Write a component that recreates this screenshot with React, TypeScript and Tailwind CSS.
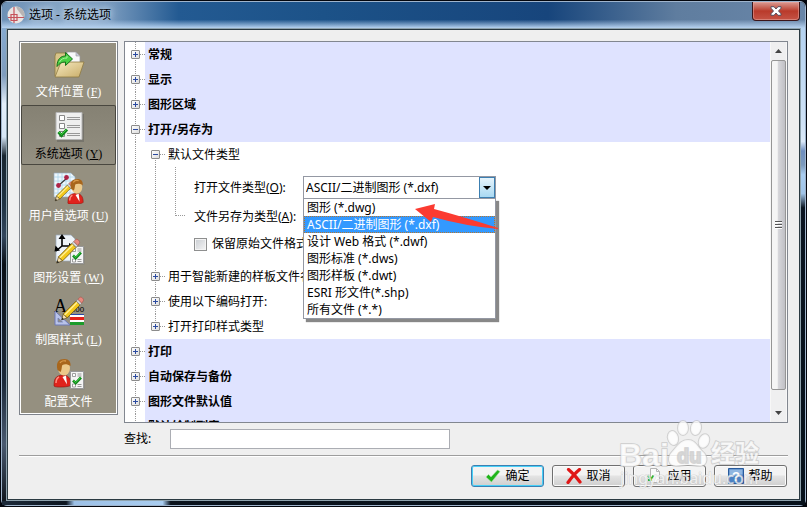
import { useState, type ReactNode } from 'react';
import clsx from 'clsx';

const FILE_TYPES = [
  '图形 (*.dwg)',
  'ASCII/二进制图形 (*.dxf)',
  '设计 Web 格式 (*.dwf)',
  '图形标准 (*.dws)',
  '图形样板 (*.dwt)',
  'ESRI 形文件(*.shp)',
  '所有文件 (*.*)',
];

function Pencil() {
  return (
    <g>
      <path d="M3 29l2-7 4.5 4.5z" fill="#f6dfae" stroke="#5b4a1a" strokeWidth=".8" />
      <path d="M3 29l.8-2.8 2 2z" fill="#222" />
      <path d="M5 22L20 7l4.500 4.500L9.500 26.500z" fill="#f3c81c" stroke="#6d540c" strokeWidth=".9" />
      <path d="M6.500 23.200L21.200 8.500" stroke="#fff19a" strokeWidth="1.500" />
      <path d="M20 7l2-2 4.500 4.500-2 2z" fill="#d8d8d8" stroke="#666" strokeWidth=".6" />
      <path d="M22 5l2.300-2.300c1.500-1.200 5.200 2.200 4 4L26.500 9.500z" fill="#e8897f" stroke="#9c4a40" strokeWidth=".6" />
    </g>
  );
}

function Person() {
  return (
    <g>
      <path d="M1 28c0-8 2-10 8-11 6 0 9 3 9 10 0 2-16 3-17 1z" fill="#e0231c" stroke="#8d120c" strokeWidth=".6" />
      <path d="M9.500 19l3.500-1.500 1 9z" fill="#fff" />
      <path d="M3 25c0-3 1-5 3-6" stroke="#ff8d7e" strokeWidth="1.500" fill="none" />
      <ellipse cx="11" cy="10" rx="6" ry="7.500" fill="#ecc98a" />
      <path d="M4.500 12C2.500 4 6 1 11.500 1 16 1 18 4 17.500 8c-3-2-6-2-8-1-1 1-.5 5-2 7z" fill="#a8661c" />
      <path d="M7 5c1-2 4-2.500 6-2" stroke="#d99b4c" strokeWidth="1.300" fill="none" />
    </g>
  );
}

function CheckSheet() {
  return (
    <g>
      <path d="M1.500 1.500h13v17h-13z" fill="#777" opacity=".5" />
      <path d="M.5.500h13v17H.500z" fill="#f4f4f4" stroke="#999" />
      <path d="M2.500 2.500h3v3h-3zM2.500 13h3v3h-3z" fill="#fff" stroke="#888" strokeWidth=".8" />
      <path d="M7.500 3h4M7.500 5h4M7.500 13.500h4M7.500 15.500h4" stroke="#999" />
      <path d="M3 9.500l2.700 2.700L11 6.500" fill="none" stroke="#128a1e" strokeWidth="2.600" />
      <path d="M3.500 9.500l2.200 2L10.500 6.500" fill="none" stroke="#3fce45" strokeWidth="1" />
    </g>
  );
}

function FolderIcon() {
  return (
    <svg viewBox="0 0 32 32" className="size-8">
      <defs>
        <linearGradient id="folder" x1="0" y1="0" x2="1" y2="1">
          <stop offset="0" stopColor="#f6eac0" />
          <stop offset="1" stopColor="#c9ad69" />
        </linearGradient>
      </defs>
      <path d="M2 8l1-3h9l2 3v20H2z" fill="#d8c489" stroke="#8f7b42" strokeWidth=".8" />
      <path d="M14 4h9l4 4v12H14z" fill="#f8f8fa" stroke="#999" strokeWidth=".7" />
      <path d="M23 4v4h4z" fill="#ccd" stroke="#999" strokeWidth=".6" />
      <path d="M8 14h23l-5 15H2z" fill="url(#folder)" stroke="#8f7b42" strokeWidth=".8" />
      <path d="M4 18.500C4 11 8 8 12.500 8V4.500l7 6.500-7 6.500V14c-4 0-6 1.500-8.500 4.500z" fill="#49cf43" stroke="#17701b" />
      <path d="M6.500 14c1.500-3 4-4 7.500-4V8" fill="none" stroke="#a8f29a" />
    </svg>
  );
}

function OptionsIcon() {
  return (
    <svg viewBox="0 0 32 32" className="size-8">
      <path d="M4 4h27v28H4z" fill="#555" opacity=".4" />
      <path d="M3 2.500h26v27H3z" fill="#efefef" stroke="#b5b5b5" />
      <path d="M6.500 5.500h5v5h-5zM6.500 13.500h5v5h-5zM6.500 21.500h5v5h-5z" fill="#fff" stroke="#888" />
      <path d="M14 7.500h13M14 9.500h13M14 15.500h13M14 17.500h13M14 23.500h13M14 25.500h13" stroke="#999" />
      <path d="M5.500 22l3 3.500 5.500-6" fill="none" stroke="#128a1e" strokeWidth="3" />
      <path d="M6 22l2.500 2.500 5-5" fill="none" stroke="#42d044" />
    </svg>
  );
}

function UserPrefsIcon() {
  return (
    <svg viewBox="0 0 32 32" className="size-8">
      <path d="M1 1h17l4 4v20H1z" fill="#eef7fd" stroke="#9ab" strokeWidth=".7" />
      <path d="M5 1v24M9 1v24M13 1v24M17 1v24M1 5h21M1 9h21M1 13h21M1 17h21M1 21h21" stroke="#a9d3ea" strokeWidth=".8" />
      <path d="M5 14l9-8" stroke="#333" strokeWidth="1.200" />
      <circle cx="5.500" cy="13.500" r="2.400" fill="#ad2348" />
      <circle cx="13.500" cy="5.500" r="2.400" fill="#ad2348" />
      <g transform="translate(0 8) scale(.72)"><Pencil /></g>
      <g transform="translate(14 6) scale(.9)"><Person /></g>
    </svg>
  );
}

function DrawingSettingsIcon() {
  return (
    <svg viewBox="0 0 32 32" className="size-8">
      <path d="M3 1h15l4 4v22H3z" fill="#eef3f8" stroke="#9ab" strokeWidth=".7" />
      <path d="M9 3v9l-6 5M9 12h10" fill="none" stroke="#000" strokeWidth="1.600" />
      <path d="M9 0L5.500 5h7zM1.500 17.500l1-6 4.500 5zM21 12l-5-3v6z" fill="#000" />
      <g transform="translate(17 12)"><CheckSheet /></g>
      <g transform="translate(1 3) scale(.9)"><Pencil /></g>
    </svg>
  );
}

function DraftingIcon() {
  return (
    <svg viewBox="0 0 32 32" className="size-8">
      <text x="1" y="16" fontSize="18" fontFamily="Liberation Serif, serif">A</text>
      <text x="20" y="16" fontSize="8" fontFamily="Liberation Sans, sans-serif">.00</text>
      <path d="M2 15v14h15z" fill="#b9c3e8" stroke="#6c79b5" />
      <path d="M5 22v4h4.500z" fill="#959080" stroke="#6c79b5" strokeWidth=".7" />
      <path d="M17 18h14v3H17z" fill="#fff" />
      <path d="M17 18.500h14" stroke="#2b4aa5" />
      <path d="M17 21h14v3H17z" fill="#e32119" />
      <path d="M17 24h14v2H17z" fill="#fff" />
      <path d="M17 26h14v3H17z" fill="#1c9c2b" />
      <g transform="translate(6 -1) scale(.86)"><Pencil /></g>
    </svg>
  );
}

function ProfileIcon() {
  return (
    <svg viewBox="0 0 32 32" className="size-8">
      <Person />
      <g transform="translate(17 13)"><CheckSheet /></g>
    </svg>
  );
}

const NAV_ITEMS: { label: string; mnemonic?: string; icon: ReactNode }[] = [
  { label: '文件位置', mnemonic: 'F', icon: <FolderIcon /> },
  { label: '系统选项', mnemonic: 'Y', icon: <OptionsIcon /> },
  { label: '用户首选项', mnemonic: 'U', icon: <UserPrefsIcon /> },
  { label: '图形设置', mnemonic: 'W', icon: <DrawingSettingsIcon /> },
  { label: '制图样式', mnemonic: 'L', icon: <DraftingIcon /> },
  { label: '配置文件', icon: <ProfileIcon /> },
];

function Sidebar() {
  const [active, setActive] = useState(1);

  return (
    <nav className="flex w-[99px] shrink-0 flex-col self-start border border-[#7e838b] bg-white p-px">
      <div className="flex flex-col gap-0.5 bg-[#959080]">
        {NAV_ITEMS.map((item, i) => (
          <button
            key={item.label}
            type="button"
            onClick={() => setActive(i)}
            className={clsx(
              'flex h-[60px] flex-col items-center gap-[3px] rounded-xs pt-[5px] font-["Liberation_Serif","Noto_Sans_CJK_SC",serif] leading-[18px]',
              i === active
                ? 'bg-linear-to-b from-[#858173] to-[#949082] text-black ring-1 ring-inset ring-[#49473f]'
                : 'text-white',
            )}
          >
            {item.icon}
            <span className="whitespace-nowrap">
              {item.label}
              {item.mnemonic && <> (<u>{item.mnemonic}</u>)</>}
            </span>
          </button>
        ))}
      </div>
    </nav>
  );
}

/* One 20px column of the tree: dotted guide line, optionally with an expander box */
function Guide({ expander, className = 'inset-y-0' }: { expander?: 'open' | 'closed'; className?: string }) {
  return (
    <span className="relative flex w-5 shrink-0 items-center justify-center self-stretch bg-white pl-px">
      <span className={clsx('absolute left-[10px] border-l border-dotted border-[#999]', className)} />
      {expander && (
        <>
          <span className="absolute right-0 top-3 w-[5px] border-t border-dotted border-[#999]" />
          <button
            type="button"
            aria-label={expander === 'open' ? '折叠' : '展开'}
            className="relative size-[9px] rounded-[1px] border border-[#8b8b8b] bg-linear-to-br from-white to-[#dcdcdc]"
          >
            <span className="absolute left-px top-[3px] h-px w-[5px] bg-[#2b4aa0]" />
            {expander === 'closed' && <span className="absolute left-[3px] top-px h-[5px] w-px bg-[#2b4aa0]" />}
          </button>
        </>
      )}
    </span>
  );
}

function Category({ label, open }: { label: string; open?: boolean }) {
  return (
    <div className="flex h-[25px] shrink-0 items-center">
      <Guide expander={open ? 'open' : 'closed'} />
      <span className="flex flex-1 items-center self-stretch bg-[#dfe3ff] pl-[3px] font-bold">{label}</span>
    </div>
  );
}

function SubCategory({ label, open, last }: { label: string; open?: boolean; last?: boolean }) {
  return (
    <div className="flex h-[25px] shrink-0 items-center">
      <Guide />
      <Guide expander={open ? 'open' : 'closed'} className={open ? 'top-3 bottom-0' : last ? 'top-0 bottom-3' : 'inset-y-0'} />
      <span className="whitespace-nowrap pl-[3px]">{label}</span>
    </div>
  );
}

function ComboBox({ id, value, onChange, children }: {
  id: string;
  value: string;
  onChange: (v: string) => void;
  children?: ReactNode;
}) {
  return (
    <div className="relative w-[193px]">
      <select
        id={id}
        value={value}
        onChange={(e) => onChange(e.target.value)}
        className="block h-[23px] w-full appearance-none border border-[#9498a3] bg-white pl-0.5"
      >
        {FILE_TYPES.map((t) => <option key={t}>{t}</option>)}
      </select>
      <span className="pointer-events-none absolute inset-y-px right-px flex w-4 items-center justify-center border border-[#3c7fb1] bg-linear-to-b from-[#e6f4fc] to-[#a9d9f2]">
        <svg viewBox="0 0 8 4" className="h-1 w-2"><path d="M0 0h8L4 4z" /></svg>
      </span>
      {children}
    </div>
  );
}

function OpenList({ value, onPick }: { value: string; onPick: (v: string) => void }) {
  return (
    <>
      <ul
        role="listbox"
        aria-label="打开文件类型"
        className="absolute inset-x-0 top-full z-10 -mt-px border border-[#9498a3] bg-white shadow-[3px_3px_1px_#0007]"
      >
        {FILE_TYPES.map((t) => (
          <li
            key={t}
            role="option"
            aria-selected={t === value}
            onClick={() => onPick(t)}
            className={clsx(
              'h-[17px] whitespace-nowrap border border-dotted pl-0.5 leading-[15px]',
              t === value ? 'border-[#b5762f] bg-[#3399ff] text-white' : 'border-transparent',
            )}
          >
            {t}
          </li>
        ))}
      </ul>
      <svg viewBox="0 0 84 26" className="absolute left-28 top-7 z-20 h-[26px] w-[84px]">
        <path d="M0 5L20 0l-1 5q30 8 64 19v1Q50 22 18 13l-2 5z" fill="#fb3b31" />
      </svg>
    </>
  );
}

function OptionsTree() {
  const [openType, setOpenType] = useState(FILE_TYPES[1]);
  const [saveType, setSaveType] = useState(FILE_TYPES[0]);

  return (
    <section className="flex min-h-0 flex-1 border border-[#828790] bg-white">
      <div className="flex flex-1 flex-col overflow-hidden">
        <Category label="常规" />
        <Category label="显示" />
        <Category label="图形区域" />
        <Category label="打开/另存为" open />
        <SubCategory label="默认文件类型" open />
        <div className="flex shrink-0">
          <Guide />
          <Guide />
          <span className="flex w-5 shrink-0 justify-end">
            <span className="h-[49px] w-[10px] border-b border-l border-dotted border-[#999]" />
          </span>
          <div className="flex flex-col gap-1.5 pb-[10px] pl-[9px] pt-[9px]">
            <div className="flex items-center">
              <label htmlFor="open-type" className="w-[109px]">打开文件类型(<u>O</u>):</label>
              <ComboBox id="open-type" value={openType} onChange={setOpenType}>
                <OpenList value={openType} onPick={setOpenType} />
              </ComboBox>
            </div>
            <div className="flex items-center">
              <label htmlFor="save-type" className="w-[109px]">文件另存为类型(<u>A</u>):</label>
              <ComboBox id="save-type" value={saveType} onChange={setSaveType} />
            </div>
            <label className="flex h-5 items-center gap-[5px]">
              <input
                type="checkbox"
                className="size-[13px] appearance-none border border-[#8e8f8f] bg-linear-to-br from-[#c9cdd2] to-[#f6f6f6] shadow-[inset_0_0_0_1px_#f4f4f4] checked:bg-[#3399ff]"
              />
              <span>保留原始文件格式(<u>R</u>)</span>
            </label>
          </div>
        </div>
        <SubCategory label="用于智能新建的样板文件名" />
        <SubCategory label="使用以下编码打开:" />
        <SubCategory label="打开打印样式类型" last />
        <Category label="打印" />
        <Category label="自动保存与备份" />
        <Category label="图形文件默认值" />
        <Category label="默认绘制列表" />
      </div>
      <div className="flex w-[17px] shrink-0 flex-col border-x border-[#f7f7f7] bg-[#efeff0]">
        <button type="button" aria-label="向上滚动" className="flex h-[18px] items-center justify-center">
          <svg viewBox="0 0 7 4" className="h-1 w-[7px]"><path d="M0 4h7L3.500 0z" fill="#444" /></svg>
        </button>
        <div className="flex flex-1 flex-col items-center justify-center gap-px rounded-xs border border-[#959595] bg-linear-to-r from-[#f5f5f5] from-40% via-[#d6d6da] via-50% to-[#c0c0c5]">
          <span className="h-0.5 w-[7px] border-b border-white bg-[#555]" />
          <span className="h-0.5 w-[7px] border-b border-white bg-[#555]" />
          <span className="h-0.5 w-[7px] border-b border-white bg-[#555]" />
        </div>
        <button type="button" aria-label="向下滚动" className="mt-3.5 flex h-[18px] items-center justify-center">
          <svg viewBox="0 0 7 4" className="h-1 w-[7px]"><path d="M0 0h7L3.500 4z" fill="#444" /></svg>
        </button>
      </div>
    </section>
  );
}

function DialogButton({ label, icon, primary }: { label: string; icon: ReactNode; primary?: boolean }) {
  return (
    <button
      type="button"
      className={clsx(
        'flex h-[22px] w-[73px] items-center justify-center gap-1 rounded-[3px] border bg-linear-to-b from-[#f3f3f3] from-45% via-[#e4e4e4] via-50% to-[#cfcfcf]',
        primary ? 'border-[#3c7fb1] shadow-[inset_0_0_0_1px_#46d0f8]' : 'border-[#707070] shadow-[inset_0_0_0_1px_#fbfbfb]',
      )}
    >
      {icon}
      {label}
    </button>
  );
}

function Footer() {
  return (
    <footer className="flex justify-end gap-2 pr-px pt-2">
      <DialogButton
        primary
        label="确定"
        icon={
          <svg viewBox="0 0 16 16" className="size-4">
            <path d="M1 9l2.500-2.500L6 9l6.500-7L15 3.500 6.500 14z" fill="#1fb41a" stroke="#a5dfa0" strokeWidth=".6" />
          </svg>
        }
      />
      <DialogButton
        label="取消"
        icon={
          <svg viewBox="0 0 16 16" className="size-4">
            <path d="M2.500 1.500Q8 6 14 14M13.500 1.500Q8 6 2 14.500" fill="none" stroke="#e01616" strokeWidth="3.200" strokeLinecap="round" />
          </svg>
        }
      />
      <DialogButton
        label="应用"
        icon={
          <svg viewBox="0 0 16 16" className="size-4">
            <path d="M3.500.500h6l3 3v11h-9z" fill="#fafafa" stroke="#b4b4b4" />
            <path d="M9.500.500v3h3" fill="none" stroke="#b4b4b4" />
            <path d="M1 7.500l3 3.500 2.500-3.500M1 12h4" fill="none" stroke="#35b52c" strokeWidth="2" />
          </svg>
        }
      />
      <DialogButton
        label="帮助"
        icon={
          <svg viewBox="0 0 16 16" className="size-4">
            <path d="M.5.500h15v15H.500z" fill="#4c82c4" stroke="#285a9c" />
            <path d="M1.500 1.500h13v5q-6 0-13 3z" fill="#8fb5e0" />
            <text x="8" y="13" fontSize="13" fontWeight="700" textAnchor="middle" fill="#fff" fontFamily="Liberation Sans, sans-serif">?</text>
          </svg>
        }
      />
    </footer>
  );
}

function TitleBar() {
  return (
    <header className="flex h-[26px] shrink-0 items-center rounded-t-[5px] bg-[linear-gradient(to_bottom,transparent_68%,#b6d2f0_100%),linear-gradient(to_right,#6d90b5_0%,#86a5c5_8%,#7396bb_14%,#235a92_22%,#1c5288_40%,#17457c_68%,#5f7d9f_84%,#6986a8_100%)] pl-[5px]">
      <svg viewBox="0 0 18 18" className="mr-1 size-[18px]">
        <circle cx="9" cy="9" r="8.500" fill="#e9e4e2" />
        <path d="M9 0.500A8.500 8.500 0 0 1 17 12L10 3z" fill="#b9b4b3" />
        <path d="M7 1v16M1 11.500h16" stroke="#c6525a" strokeWidth="1.200" />
        <path d="M4 8.500h6v6H4z" fill="none" stroke="#c6525a" strokeWidth="1.200" />
      </svg>
      <h1 className="flex-1 text-black [text-shadow:0_0_6px_#d6e6f6,0_0_10px_#d6e6f6]">选项 - 系统选项</h1>
      <button
        type="button"
        aria-label="关闭"
        className="mr-[5px] flex h-[19px] w-12 items-center justify-center self-start rounded-b-[4px] border border-t-0 border-[#3b1519] bg-linear-to-b from-[#d99a93] from-0% via-[#b93a2b] via-50% to-[#c55345] shadow-[inset_0_0_0_1px_#e9aea780]"
      >
        <svg viewBox="0 0 12 10" className="h-2.5 w-3">
          <path d="M1 .7h3L6 3l2-2.300h3v1.500L8.500 5 11 7.800v1.500H8L6 7 4 9.300H1V7.800L3.500 5 1 2.200z" fill="#fff" stroke="#4a4a5c" strokeWidth=".9" />
        </svg>
      </button>
    </header>
  );
}

function Watermark() {
  return (
    <svg viewBox="0 0 150 70" className="pointer-events-none absolute bottom-[15px] right-9 h-[70px] w-[150px]" aria-hidden="true">
      <g fill="#fff" fillOpacity=".8" stroke="#bdbdbd" strokeOpacity=".6" strokeWidth="2" strokeLinejoin="round" paintOrder="stroke">
        <text x="0" y="46" fontSize="32" fontWeight="700" fontFamily="Liberation Sans, sans-serif">Bai</text>
        <ellipse cx="54" cy="18" rx="5" ry="7" transform="rotate(-15 54 18)" />
        <ellipse cx="64" cy="8" rx="5" ry="7" />
        <ellipse cx="77" cy="8" rx="5" ry="7" transform="rotate(10 77 8)" />
        <ellipse cx="85" cy="21" rx="5" ry="7" transform="rotate(20 85 21)" />
        <path d="M69 20c8 0 10 8 15 12s5 14-3 14c-5 0-8-1-12-1s-7 1-12 1c-8 0-9-9-4-14s8-12 16-12z" />
        <text x="58" y="43" fontSize="20" fontWeight="700" fill="#d4d4d4" fontFamily="Liberation Sans, sans-serif">du</text>
        <text x="92" y="42" fontSize="24" fontWeight="700" fontFamily="Noto Sans CJK SC, sans-serif">经验</text>
      </g>
      <text x="1" y="64" fontSize="16" fill="#fff" fillOpacity=".7" stroke="#bdbdbd" strokeOpacity=".5" strokeWidth="1" paintOrder="stroke" fontFamily="Noto Sans, sans-serif">jingyan.baidu.com</text>
    </svg>
  );
}

export default function App() {
  return (
    <div className='flex h-screen flex-col bg-[#03060d] p-px font-["Noto_Sans","Noto_Sans_CJK_SC",sans-serif] text-xs leading-[18px] text-black'>
      <div className="relative flex min-h-0 flex-1 flex-col rounded-md border border-[#9fb4cc] bg-[#06111b]">
        <TitleBar />
        <div className="flex min-h-0 flex-1">
          <div className="w-1 shrink-0 bg-[linear-gradient(to_bottom,#86aad0_0%,#7f9cbd_10%,#e3eefa_16%,#d6e6f6_23%,#1a2630_27%,#1f3242_37%,#33465c_44%,#0a0f15_50%,#1d2a3a_75%,#4a5a70_88%,#10161e_100%)]" />
          <main className="flex min-w-0 flex-1 flex-col border border-[#8fa3ae]">
            <div className="flex min-h-0 flex-1 flex-col border border-[#2b3a42] bg-[#efefef] px-[11px] pb-3 pt-[11px]">
              <div className="flex min-h-0 flex-1 gap-1.5">
                <Sidebar />
                <div className="flex min-w-0 flex-1 flex-col gap-1.5">
                  <OptionsTree />
                  <div className="flex items-center">
                    <label htmlFor="search" className="w-[46px]">查找:</label>
                    <input id="search" type="text" className="h-5 w-[280px] border border-[#abadb3] bg-white px-1" />
                  </div>
                </div>
              </div>
              <hr className="mt-1.5 h-0.5 border-b border-t border-b-white border-t-[#9d9d9d]" />
              <Footer />
            </div>
          </main>
          <div className="w-1 shrink-0 bg-[linear-gradient(to_bottom,#b4d2f0_0%,#cfe2f6_20%,#dbe9f8_24%,#6f8fc0_26%,#7d9bbd_29%,#a9cdf0_31%,#a0c4e8_35%,#0a1420_38%,#06111b_100%)]" />
        </div>
        <div className="h-1 shrink-0 bg-[linear-gradient(to_right,#1c2a3a_0%,#0c1520_8%,#9cc0e6_9%,#a9cdf0_20%,#0a121c_21%,#06111b_100%)]" />
        <Watermark />
      </div>
    </div>
  );
}
